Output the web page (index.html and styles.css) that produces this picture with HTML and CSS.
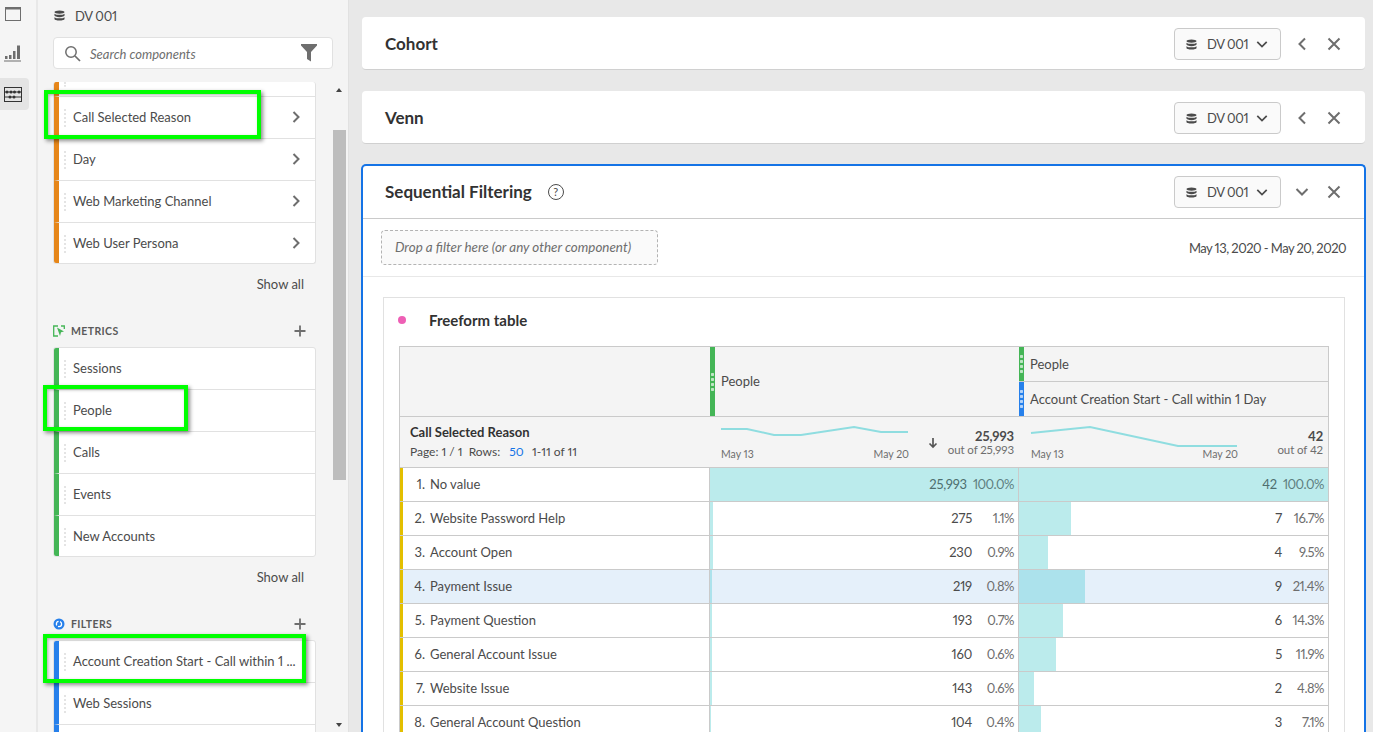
FILE: index.html
```html
<!DOCTYPE html>
<html lang="en">
<head>
    <meta charset="UTF-8">
    <title>Sequential Filtering</title>
    <link rel="stylesheet" href="styles.css">
</head>
<body>
<svg class="sprite" width="0" height="0">
    <symbol id="db" viewBox="0 0 12 12"><path fill="currentColor" d="M6 .5c3 0 5.500 .8 5.500 1.800S9 4.100 6 4.100 .5 3.300 .5 2.300 3 .5 6 .5zM.5 4c1 .9 3 1.300 5.500 1.300S10.500 4.900 11.500 4v2.100C11.500 7 9 7.800 6 7.800S.5 7 .5 6.100zM.5 7.800c1 .9 3 1.300 5.500 1.300s4.500-.4 5.500-1.300v2c0 1-2.500 1.700-5.500 1.700S.5 10.800.5 9.800z"/></symbol>
    <symbol id="chev-r" viewBox="0 0 10 14"><path fill="none" stroke="currentColor" stroke-width="2" d="M2.500 2l5 5-5 5"/></symbol>
    <symbol id="chev-l" viewBox="0 0 14 14"><path fill="none" stroke="currentColor" stroke-width="2" d="M10 1.500L4.500 7l5.500 5.500"/></symbol>
    <symbol id="chev-d" viewBox="0 0 14 10"><path fill="none" stroke="currentColor" stroke-width="2" d="M1.500 2L7 7.500 12.500 2"/></symbol>
    <symbol id="close" viewBox="0 0 14 14"><path fill="none" stroke="currentColor" stroke-width="2" d="M1.500 1.500l11 11M12.500 1.500l-11 11"/></symbol>
    <symbol id="plus" viewBox="0 0 14 14"><path fill="none" stroke="currentColor" stroke-width="1.800" d="M7 1.500v11M1.500 7h11"/></symbol>
</svg>

<div class="app">
    <!-- left icon rail -->
    <nav class="rail">
        <div class="rail-btn">
            <svg width="18" height="16" viewBox="0 0 18 16"><rect x="1.500" y="1.500" width="15" height="13" fill="none" stroke="#6e6e6e"/><rect x="1" y="1" width="16" height="2.500" fill="#6e6e6e"/></svg>
        </div>
        <div class="rail-btn">
            <svg width="18" height="18" viewBox="0 0 18 18"><path fill="#6e6e6e" d="M1 11h2.500v3H1zM5 10h2.500v4H5zM9 6h2.500v8H9zM13 .5h3V14h-3zM0 15.500h17V16.500H0z"/></svg>
        </div>
        <div class="rail-btn active">
            <svg width="18" height="15" viewBox="0 0 18 15"><g fill="none" stroke="#333"><rect x=".5" y=".5" width="17" height="14"/><path d="M.5 5h17M.5 10h17"/></g><g fill="#333"><circle cx="3" cy="5" r="1.500"/><circle cx="7" cy="5" r="1.500"/><circle cx="10.500" cy="5" r="1.500"/><circle cx="15" cy="5" r="1.500"/><circle cx="6" cy="10" r="1.500"/><circle cx="10" cy="10" r="1.500"/></g></svg>
        </div>
    </nav>

    <!-- components panel -->
    <aside class="sidebar">
        <div class="source"><svg class="db-icon"><use href="#db"/></svg><span>DV 001</span></div>
        <div class="search">
            <svg width="17" height="17" viewBox="0 0 17 17"><circle cx="7" cy="7" r="5.200" fill="none" stroke="#6e6e6e" stroke-width="1.500"/><path d="M11 11l5 5" stroke="#6e6e6e" stroke-width="1.700"/></svg>
            <span class="search-text">Search components</span>
            <svg class="funnel" width="16" height="18" viewBox="0 0 16 18"><path fill="#6e6e6e" d="M0 0h16v1.500L10 8v9.500L6 15V8L0 1.500z"/></svg>
        </div>
        <div class="components">
            <div class="comp-scroll">
                <ul class="comp-list orange">
                    <li class="comp-cut"></li>
                    <li>Call Selected Reason<svg class="chev"><use href="#chev-r"/></svg></li>
                    <li>Day<svg class="chev"><use href="#chev-r"/></svg></li>
                    <li>Web Marketing Channel<svg class="chev"><use href="#chev-r"/></svg></li>
                    <li>Web User Persona<svg class="chev"><use href="#chev-r"/></svg></li>
                </ul>
                <div class="show-all">Show all</div>

                <div class="comp-head">
                    <svg width="12" height="12" viewBox="0 0 12 12"><path fill="none" stroke="#44b556" stroke-width="1.300" d="M5 1H.7v10H5M8 1h3.300v3"/><path fill="#44b556" d="M4 2.500l7 4-3 .8L7 11z"/></svg>
                    <span>METRICS</span>
                    <svg class="plus"><use href="#plus"/></svg>
                </div>
                <ul class="comp-list green">
                    <li>Sessions</li>
                    <li>People</li>
                    <li>Calls</li>
                    <li>Events</li>
                    <li>New Accounts</li>
                </ul>
                <div class="show-all">Show all</div>

                <div class="comp-head filters-head">
                    <svg width="12" height="12" viewBox="0 0 12 12"><circle cx="6" cy="6" r="5.500" fill="#2680eb"/><circle cx="6" cy="6" r="2.600" fill="none" stroke="#fff" stroke-width="1.300" stroke-dasharray="5 1.500"/></svg>
                    <span>FILTERS</span>
                    <svg class="plus"><use href="#plus"/></svg>
                </div>
                <ul class="comp-list blue">
                    <li>Account Creation Start - Call within 1 ...</li>
                    <li>Web Sessions</li>
                    <li></li>
                </ul>
            </div>
            <div class="scrollbar">
                <span class="arrow up"></span>
                <div class="thumb"></div>
                <span class="arrow down"></span>
            </div>
        </div>

        <!-- green review marks -->
        <div class="mark mark-reason"></div>
        <div class="mark mark-people"></div>
        <div class="mark mark-account"></div>
    </aside>

    <main class="workspace">
        <section class="panel">
            <div class="panel-head">
                <h2>Cohort</h2>
                <div class="dv-btn"><svg class="db-icon"><use href="#db"/></svg>DV 001<svg class="caret"><use href="#chev-d"/></svg></div>
                <svg class="head-icon"><use href="#chev-l"/></svg>
                <svg class="head-icon"><use href="#close"/></svg>
            </div>
        </section>
        <section class="panel">
            <div class="panel-head">
                <h2>Venn</h2>
                <div class="dv-btn"><svg class="db-icon"><use href="#db"/></svg>DV 001<svg class="caret"><use href="#chev-d"/></svg></div>
                <svg class="head-icon"><use href="#chev-l"/></svg>
                <svg class="head-icon"><use href="#close"/></svg>
            </div>
        </section>

        <section class="panel selected">
            <div class="panel-head with-line">
                <h2>Sequential Filtering</h2>
                <span class="help">?</span>
                <div class="dv-btn"><svg class="db-icon"><use href="#db"/></svg>DV 001<svg class="caret"><use href="#chev-d"/></svg></div>
                <svg class="head-icon"><use href="#chev-d"/></svg>
                <svg class="head-icon"><use href="#close"/></svg>
            </div>
            <div class="filter-row">
                <div class="drop-zone">Drop a filter here (or any other component)</div>
                <div class="date-range">May 13, 2020 - May 20, 2020</div>
            </div>
            <div class="panel-body">
                <div class="card">
                    <div class="card-title"><span class="dot"></span>Freeform table</div>
                    <div class="ff-table">
                        <div class="t-head">
                            <div class="cell-blank"></div>
                            <div class="col-head">
                                <div class="metric solo"><span class="grip green-bg"></span><span>People</span></div>
                            </div>
                            <div class="col-head">
                                <div class="metric half"><span class="grip green-bg"></span><span>People</span></div>
                                <div class="metric half"><span class="grip blue-bg"></span><span>Account Creation Start - Call within 1 Day</span></div>
                            </div>
                        </div>

                        <div class="t-summary">
                            <div class="dim">
                                <strong>Call Selected Reason</strong>
                                <div class="pager">Page: 1 / 1 &nbsp;Rows: &nbsp;<a>50</a> &nbsp;&nbsp;1-11 of 11</div>
                            </div>
                            <div class="sum">
                                <div class="spark">
                                    <svg width="188" height="16" viewBox="0 0 188 16"><polyline fill="none" stroke="#8fdde0" stroke-width="2" points="0,4 26,4 53,10 80,10 133,2 160,7 187,7"/></svg>
                                    <div class="spark-dates"><span>May 13</span><span>May 20</span></div>
                                </div>
                                <svg class="sort" width="10" height="12" viewBox="0 0 10 12"><path fill="none" stroke="#555" stroke-width="1.700" d="M5 1v9M1.500 6.500L5 10l3.500-3.500"/></svg>
                                <div class="totals"><strong>25,993</strong><span>out of 25,993</span></div>
                            </div>
                            <div class="sum">
                                <div class="spark wide">
                                    <svg width="207" height="24" viewBox="0 0 207 24"><polyline fill="none" stroke="#8fdde0" stroke-width="2" points="0,8 59,2 147,21 206,21"/></svg>
                                    <div class="spark-dates"><span>May 13</span><span>May 20</span></div>
                                </div>
                                <div class="totals"><strong>42</strong><span>out of 42</span></div>
                            </div>
                        </div>

                        <div class="t-row top">
                            <div class="label"><span class="num">1.</span>No value</div>
                            <div class="val"><i class="bar" style="width:100%"></i><b>25,993</b><em>100.0%</em></div>
                            <div class="val"><i class="bar" style="width:100%"></i><b>42</b><em>100.0%</em></div>
                        </div>
                        <div class="t-row">
                            <div class="label"><span class="num">2.</span>Website Password Help</div>
                            <div class="val"><i class="bar" style="width:1.100%"></i><b>275</b><em>1.1%</em></div>
                            <div class="val"><i class="bar" style="width:16.700%"></i><b>7</b><em>16.7%</em></div>
                        </div>
                        <div class="t-row">
                            <div class="label"><span class="num">3.</span>Account Open</div>
                            <div class="val"><i class="bar" style="width:.9%"></i><b>230</b><em>0.9%</em></div>
                            <div class="val"><i class="bar" style="width:9.500%"></i><b>4</b><em>9.5%</em></div>
                        </div>
                        <div class="t-row hover">
                            <div class="label"><span class="num">4.</span>Payment Issue</div>
                            <div class="val"><i class="bar" style="width:.8%"></i><b>219</b><em>0.8%</em></div>
                            <div class="val"><i class="bar" style="width:21.400%"></i><b>9</b><em>21.4%</em></div>
                        </div>
                        <div class="t-row">
                            <div class="label"><span class="num">5.</span>Payment Question</div>
                            <div class="val"><i class="bar" style="width:.7%"></i><b>193</b><em>0.7%</em></div>
                            <div class="val"><i class="bar" style="width:14.300%"></i><b>6</b><em>14.3%</em></div>
                        </div>
                        <div class="t-row">
                            <div class="label"><span class="num">6.</span>General Account Issue</div>
                            <div class="val"><i class="bar" style="width:.6%"></i><b>160</b><em>0.6%</em></div>
                            <div class="val"><i class="bar" style="width:11.900%"></i><b>5</b><em>11.9%</em></div>
                        </div>
                        <div class="t-row">
                            <div class="label"><span class="num">7.</span>Website Issue</div>
                            <div class="val"><i class="bar" style="width:.6%"></i><b>143</b><em>0.6%</em></div>
                            <div class="val"><i class="bar" style="width:4.800%"></i><b>2</b><em>4.8%</em></div>
                        </div>
                        <div class="t-row">
                            <div class="label"><span class="num">8.</span>General Account Question</div>
                            <div class="val"><i class="bar" style="width:.4%"></i><b>104</b><em>0.4%</em></div>
                            <div class="val"><i class="bar" style="width:7.100%"></i><b>3</b><em>7.1%</em></div>
                        </div>
                    </div>
                </div>
            </div>
        </section>
    </main>
</div>
</body>
</html>
```

FILE: styles.css
```css
* {
    box-sizing: border-box;
}

html, body {
    margin: 0;
    height: 100%;
    overflow: hidden;
}

body {
    font-family: "Lato", "Open Sans", sans-serif;
    font-size: 13px;
    font-variant-numeric: proportional-nums;
    color: #4b4b4b;
}

.sprite {
    position: absolute;
}

.app {
    display: flex;
    height: 732px;
    overflow: hidden;
}

/* icon rail */
.rail {
    width: 38px;
    flex: none;
    background: #f5f5f5;
    border-right: 2px solid #e8e8e8;
}

.rail-btn {
    width: 29px;
    height: 32px;
    display: flex;
    align-items: center;
    padding-left: 4px;
    border-radius: 0 4px 4px 0;
}

.rail-btn:first-child {
    height: 28px;
    margin-bottom: 6px;
}

.rail-btn:nth-child(2) {
    height: 40px;
    margin-bottom: 4px;
}

.rail-btn.active {
    background: #e4e4e4;
}

/* components sidebar */
.sidebar {
    position: relative;
    width: 311px;
    flex: none;
    background: #f4f4f4;
    border-right: 1px solid #e1e1e1;
    display: flex;
    flex-direction: column;
}

.source {
    display: flex;
    align-items: center;
    height: 31px;
    padding-left: 16px;
    letter-spacing: -.3px;
}

.db-icon {
    width: 11px;
    height: 11px;
    color: #4b4b4b;
    margin-right: 10px;
    flex: none;
}

.search {
    display: flex;
    align-items: center;
    margin: 6px 15px 0;
    height: 32px;
    background: #fff;
    border: 1px solid #e1e1e1;
    border-radius: 4px;
    padding: 0 15px 0 10px;
}

.search-text {
    flex: 1;
    margin-left: 9px;
    padding-top: 1px;
    font-style: italic;
    color: #6e6e6e;
}

.components {
    display: flex;
    flex: 1;
    min-height: 0;
    margin-top: 13px;
}

.comp-scroll {
    width: 295px;
    padding-left: 15px;
    overflow: hidden;
}

.comp-list {
    list-style: none;
    margin: 0;
    padding: 0;
    width: 263px;
    background: #fff;
    border: 1px solid #e1e1e1;
    border-radius: 3px;
    overflow: hidden;
}

.comp-list li {
    position: relative;
    display: flex;
    align-items: center;
    height: 42px;
    padding: 0 14px 2px 14px;
    border-bottom: 1px solid #e1e1e1;
    border-left: 5px solid #888;
    white-space: nowrap;
}

.comp-list li:last-child {
    border-bottom: 0;
    height: 40px;
    padding-bottom: 0;
}

/* drag handle */
.comp-list li::before {
    content: "";
    position: absolute;
    left: 5px;
    top: 12px;
    height: 18px;
    border-left: 2px dotted #e4e4e4;
}

.comp-list.orange li { border-left-color: #e68619; }
.comp-list.green li { border-left-color: #44b556; }
.comp-list.blue li { border-left-color: #2680eb; }

.comp-list.orange {
    border-top: 0;
}

.comp-list li.comp-cut {
    height: 15px;
}

.comp-list li.comp-cut::before {
    top: 0;
    height: 5px;
}

.chev {
    width: 10px;
    height: 14px;
    margin-left: auto;
    color: #6e6e6e;
}

.show-all {
    width: 251px;
    text-align: right;
    height: 40px;
    line-height: 40px;
}

.comp-head {
    display: flex;
    align-items: center;
    width: 263px;
    height: 22px;
    margin-top: 16px;
    margin-bottom: 5px;
    font-size: 10.500px;
    font-weight: 700;
    letter-spacing: .4px;
    color: #5a5a5a;
}

.comp-head span {
    margin-left: 6px;
}

.comp-head .plus {
    width: 14px;
    height: 14px;
    margin-left: auto;
    margin-right: 9px;
    color: #6e6e6e;
}

.filters-head {
    margin-top: 16px;
}

.scrollbar {
    width: 13px;
    display: flex;
    flex-direction: column;
    align-items: center;
    height: 100%;
    position: relative;
}

.thumb {
    width: 13px;
    height: 350px;
    margin-top: 48px;
    background: #bdbdbd;
}

.arrow {
    position: absolute;
    left: 3px;
    width: 0;
    height: 0;
    border-left: 3.500px solid transparent;
    border-right: 3.500px solid transparent;
}

.arrow.up {
    top: 6px;
    border-bottom: 4px solid #444;
}

.arrow.down {
    bottom: 5px;
    border-top: 4px solid #444;
}

/* green review marks over the list */
.mark {
    position: absolute;
    border: 4px solid #00ff00;
    box-shadow: 2px 2px 4px rgba(0, 0, 0, .45), inset 1px 1px 3px rgba(0, 0, 0, .3);
}

.mark-reason { left: 6px; top: 90px; width: 217px; height: 49px; }
.mark-people { left: 5px; top: 385px; width: 145px; height: 46px; }
.mark-account { left: 5px; top: 634px; width: 263px; height: 49px; }

/* workspace */
.workspace {
    flex: 1;
    min-width: 0;
    background: #e8e8e8;
    padding: 17px 8px 0 13px;
}

.panel {
    background: #fff;
    border-radius: 4px;
    border-bottom: 1px solid #d0d0d0;
    margin-bottom: 21px;
}

.panel.selected {
    margin: -1px -1px 0;
    border: 2px solid #1473e6;
    border-bottom: 0;
    border-radius: 5px 5px 0 0;
}

.panel-head {
    display: flex;
    align-items: center;
    height: 52px;
    padding: 2px 24px 0 23px;
}

.panel.selected .panel-head {
    height: 53px;
    padding: 0 23px 0 22px;
}

.panel-head.with-line {
    border-bottom: 1px solid #cacaca;
}

.panel-head h2 {
    margin: 0 0 2px;
    font-size: 17px;
    font-weight: 700;
    color: #323232;
}

.help {
    width: 16px;
    height: 16px;
    margin-left: 16px;
    border: 1px solid #4b4b4b;
    border-radius: 50%;
    font-size: 11px;
    line-height: 14px;
    text-align: center;
}

.dv-btn {
    display: flex;
    align-items: center;
    width: 107px;
    height: 32px;
    margin-left: auto;
    padding-left: 11px;
    background: #fafafa;
    border: 1px solid #cacaca;
    border-radius: 4px;
    letter-spacing: -.4px;
}

.caret {
    width: 12px;
    height: 9px;
    margin-left: 8px;
    color: #4b4b4b;
}

.head-icon {
    width: 14px;
    height: 14px;
    margin-left: 14px;
    color: #6e6e6e;
}

.head-icon + .head-icon {
    margin-left: 18px;
}

.filter-row {
    display: flex;
    align-items: center;
    justify-content: space-between;
    height: 58px;
    padding: 0 18px;
    border-bottom: 1px solid #e8e8e8;
}

.drop-zone {
    width: 277px;
    height: 35px;
    line-height: 33px;
    padding-left: 13px;
    background: #fafafa;
    border: 1px dashed #b3b3b3;
    border-radius: 4px;
    font-size: 13.400px;
    font-style: italic;
    color: #6e6e6e;
}

.date-range {
    letter-spacing: -.55px;
}

.panel-body {
    padding: 20px 19px 0 20px;
}

.card {
    border: 1px solid #e1e1e1;
    padding: 0 15px;
}

.card-title {
    display: flex;
    align-items: center;
    height: 48px;
    padding-bottom: 4px;
    font-size: 15px;
    font-weight: 700;
    color: #323232;
}

.dot {
    width: 8px;
    height: 8px;
    margin-left: -1px;
    margin-right: 23px;
    border-radius: 50%;
    background: #ee5fb5;
}

/* freeform table */
.ff-table {
    width: 930px;
    border: 1px solid #cacaca;
    border-bottom: 0;
}

.t-head, .t-summary, .t-row {
    display: grid;
    grid-template-columns: 310px 309px 309px;
    border-bottom: 1px solid #cacaca;
}

.t-head {
    height: 70px;
    background: #f4f4f4;
}

.col-head {
    display: flex;
    flex-direction: column;
}

.metric {
    display: flex;
    align-items: center;
    flex: 1;
}

.metric.solo span:last-child {
    padding-bottom: 2px;
}

.metric.half + .metric.half {
    border-top: 1px solid #cacaca;
}

.grip {
    width: 5px;
    height: 100%;
    margin-right: 6px;
    flex: none;
    display: flex;
    align-items: center;
    justify-content: center;
}

.grip::before {
    content: "";
    width: 3px;
    height: 20px;
    background: radial-gradient(circle, rgba(255, 255, 255, .65) 1.400px, transparent 1.500px) 0 0 / 3px 5px;
}

.green-bg { background-color: #44b556; }
.blue-bg { background-color: #2680eb; }

.t-summary {
    height: 51px;
    background: #f4f4f4;
}

.dim {
    padding: 7px 0 0 10px;
    font-size: 12px;
}

.dim strong {
    display: block;
    font-size: 13px;
    color: #323232;
    line-height: 17px;
}

.pager {
    margin-top: 3px;
}

.pager a {
    margin: 0 -1px 0 3px;
    color: #1473e6;
}

.sum {
    display: flex;
    padding: 0 5px 0 11px;
    position: relative;
}

.spark {
    width: 188px;
    padding-top: 8px;
}

.spark.wide {
    width: 207px;
    margin-left: 1px;
}

.spark svg {
    display: block;
    overflow: visible;
}

.spark-dates {
    display: flex;
    justify-content: space-between;
    font-size: 10.500px;
    position: absolute;
    top: 31px;
    left: 11px;
    width: 188px;
    color: #6e6e6e;
}

.spark.wide .spark-dates {
    left: 12px;
    width: 207px;
}

.sort {
    margin: 20px 0 0 19px;
}

.totals {
    margin-left: auto;
    padding-top: 12px;
    text-align: right;
    line-height: 14px;
    font-size: 11.500px;
    letter-spacing: -.1px;
}

.totals strong {
    display: block;
    font-size: 13px;
}

.totals span {
    color: #6e6e6e;
}

.t-row {
    grid-template-columns: 309px 309px 310px;
    height: 34px;
    background: #fff;
}

.label {
    display: flex;
    align-items: center;
    padding-bottom: 2px;
    border-left: 3px solid #e3bf00;
}

.num {
    width: 27px;
    padding-right: 5px;
    text-align: right;
    flex: none;
}

.val {
    position: relative;
    display: flex;
    align-items: center;
    justify-content: flex-end;
    padding: 0 4px 2px 0;
    border-left: 1px solid #cacaca;
    letter-spacing: -.2px;
}

.bar {
    position: absolute;
    left: 0;
    top: 0;
    bottom: 0;
    background: #bbebec;
}

.val b, .val em {
    position: relative;
    font-weight: 400;
    font-style: normal;
}

.val b {
    margin-right: 6px;
}

.val em {
    min-width: 36px;
    text-align: right;
    letter-spacing: -.5px;
    color: #6e6e6e;
}

.t-row.top b {
    color: #4e6f6f;
}

.t-row.top em {
    color: #5e7f7f;
}

.t-row.hover,
.t-row.hover .label {
    background: #e5f0fa;
}

.t-row.hover .bar {
    background: #ace2ec;
}
```
